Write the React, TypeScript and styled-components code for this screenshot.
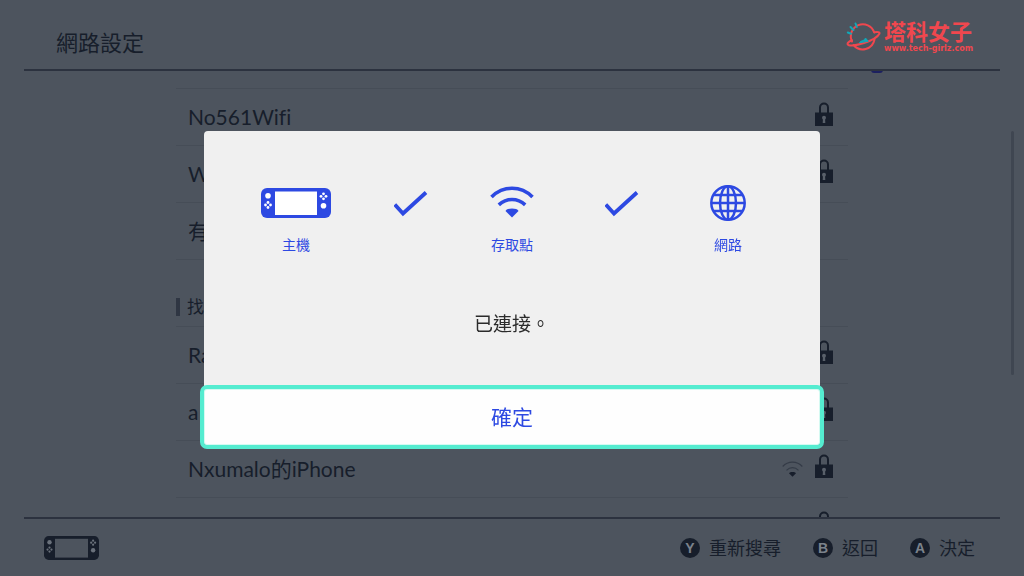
import React from "react";
import styled, { createGlobalStyle } from "styled-components";

const ink = "#171e2b";
const backdrop = "#4d545e";
const accent = "#2d49e2";

const GlobalStyle = createGlobalStyle`
  * { box-sizing: border-box; }
  body {
    margin: 0;
    background: ${backdrop};
    color: ${ink};
    font-family: Lato, "Noto Sans CJK TC", sans-serif;
    font-variant-ligatures: none;
  }
  button { font: inherit; color: inherit; background: none; border: 0; padding: 0; cursor: pointer; }
  h1, h2, p, ul { margin: 0; padding: 0; font-weight: 400; }
  svg { display: block; flex: none; }
`;

const Screen = styled.div`
  display: grid;
  grid-template-rows: auto minmax(0, 1fr) auto;
  height: 100vh;
  padding: 0 24px;
`;

const Header = styled.header`
  display: flex;
  justify-content: space-between;
  height: 71px;
  padding: 0 22px 0 32px;
  border-bottom: 2px solid #2c323f;
`;

const Title = styled.h1`
  align-self: center;
  padding-top: 16px;
  font-size: 22px;
  line-height: 32px;
`;

const Brand = styled.a`
  display: flex;
  align-items: flex-start;
  gap: 2px;
  padding-top: 21px;
  color: #f0474e;
  text-decoration: none;
`;

const BrandText = styled.span`
  display: flex;
  flex-direction: column;
  min-width: 94px;
`;

const BrandName = styled.strong`
  font-size: 22px;
  line-height: 22px;
  font-weight: 700;
`;

const BrandUrl = styled.small`
  font: 700 8px/12px "DejaVu Sans", sans-serif;
`;

const Main = styled.main`
  position: relative;
  overflow: hidden;
  padding-top: 17px;
`;

const Column = styled.div`
  width: 100%;
  max-width: 672px;
  margin: 0 auto;
`;

const NetworkList = styled.ul`
  list-style: none;
  border-top: 1px solid #464d57;
`;

const NetworkItem = styled.li`
  border-bottom: 1px solid #464d57;
`;

const NetworkButton = styled.button`
  display: flex;
  align-items: center;
  gap: 12px;
  width: 100%;
  height: 56px;
  padding: 0 15px 0 12px;
  font-size: 21px;
  line-height: 32px;
  text-align: left;
`;

const NetworkName = styled.span`
  flex: 1;
`;

const SectionTitle = styled.h2`
  display: flex;
  align-items: center;
  gap: 7px;
  padding: 34px 0 7px;
  font-size: 17px;
  line-height: 25px;

  &::before {
    content: "";
    width: 4px;
    height: 18px;
    background: #2f3643;
  }
`;

const Spinner = styled.span`
  position: absolute;
  top: -1px;
  right: 117px;
  width: 12px;
  height: 3px;
  border-radius: 0 0 6px 6px;
  background: #1c2060;
`;

const ScrollThumb = styled.div`
  position: fixed;
  top: 131px;
  right: 10px;
  width: 3px;
  height: 244px;
  border-radius: 2px;
  background: #3f4651;
`;

const Footer = styled.footer`
  display: flex;
  align-items: center;
  justify-content: space-between;
  height: 59px;
  padding: 0 25px 0 20px;
  border-top: 2px solid #2c323f;
`;

const Actions = styled.div`
  display: flex;
  gap: 32px;
`;

const Action = styled.button`
  display: flex;
  align-items: center;
  gap: 9px;
  font-size: 18px;
  line-height: 26px;
`;

const Key = styled.kbd`
  width: 20px;
  height: 20px;
  border-radius: 50%;
  background: ${ink};
  color: #7b828b;
  font: 700 14px/20px "Liberation Sans", sans-serif;
  text-align: center;
`;

const Overlay = styled.div`
  position: fixed;
  inset: 0;
  display: flex;
  align-items: center;
  justify-content: center;
`;

const Dialog = styled.section`
  width: calc(100% - 80px);
  max-width: 616px;
  border-radius: 4px;
  background: #f0f0f0;
`;

const Steps = styled.div`
  display: grid;
  grid-template-columns: 70px 159fr 44px 176fr 36px;
  justify-items: center;
  padding: 52px 74px 0 57px;
  color: ${accent};
`;

const Step = styled.div`
  display: flex;
  flex-direction: column;
  align-items: center;
  gap: 12px;
  font-size: 14px;
  line-height: 20px;
  white-space: nowrap;
`;

const Mark = styled.div`
  display: flex;
  align-items: center;
  height: 40px;
`;

const Message = styled.p`
  padding: 55px 0 51px;
  color: #2b2b2b;
  font-size: 19px;
  line-height: 28px;
  text-align: center;
`;

const Confirm = styled.button`
  display: block;
  width: 100%;
  height: 56px;
  border-radius: 3px;
  background: #fefefe;
  box-shadow: inset 0 0 0 1px #d5faf2;
  outline: 4px solid #55ecd0;
  color: ${accent};
  font-size: 21px;
  line-height: 56px;
`;

const Console = ({ width, height, screen, dots }: { width: number; height: number; screen: string; dots: string }) => (
  <svg width={width} height={height} viewBox="0 0 70 30" preserveAspectRatio="none" aria-hidden="true">
    <rect width="70" height="30" rx="6" fill="currentColor" />
    <rect x="14" y="3.5" width="42" height="23.5" fill={screen} />
    <g fill={dots}>
      <circle cx="7" cy="7.7" r="2.8" />
      <circle cx="62.5" cy="17.8" r="2.8" />
      {[[7, 17], [62.5, 8.3]].map(([x, y]) => (
        <g key={x}>
          <circle cx={x} cy={y - 2.5} r="1.4" />
          <circle cx={x} cy={y + 2.5} r="1.4" />
          <circle cx={x - 2.5} cy={y} r="1.4" />
          <circle cx={x + 2.5} cy={y} r="1.4" />
        </g>
      ))}
    </g>
  </svg>
);

const Check = () => (
  <svg width="34" height="28" viewBox="0 0 34 28" fill="none" stroke="currentColor" strokeWidth="3.8" aria-hidden="true">
    <path d="M.8 15.500 9 24.500 32 3.500" />
  </svg>
);

const Wifi = () => (
  <svg width="44" height="34" viewBox="0 0 44 34" fill="none" stroke="currentColor" strokeWidth="3.6" aria-hidden="true">
    <path d="M1.5 11C13-.6 31-.6 42.500 11" />
    <path d="M8.800 18.800C16.500 11.800 27.500 11.800 35.200 18.800" />
    <path d="M15.500 25C17 21.800 27 21.800 28.500 25L22 31.500Z" fill="currentColor" stroke="none" />
  </svg>
);

const WeakWifi = () => (
  <svg width="21" height="16" viewBox="0 0 21 16" fill="none" stroke="#343b47" strokeWidth="1.2" aria-hidden="true">
    <path d="M.7 5.500C6-.3 15-.3 20.300 5.500" />
    <path d="M4.500 9.300C8 5.800 13 5.800 16.500 9.300" />
    <path d="M7 12.300C8 10.700 13 10.700 14 12.300L10.500 15.800Z" fill={ink} stroke="none" />
  </svg>
);

const Globe = () => (
  <svg width="36" height="36" viewBox="0 0 36 36" fill="none" stroke="currentColor" strokeWidth="2.5" aria-hidden="true">
    <circle cx="18" cy="18" r="16.700" />
    <ellipse cx="18" cy="18" rx="8" ry="16.700" />
    <path d="M18 1V35M1.500 18H34.500M4 10H32M4 26H32" />
  </svg>
);

const Lock = () => (
  <svg width="18" height="30" viewBox="0 0 18 30" aria-hidden="true">
    <path d="M5 11V5.500a4 4 0 0 1 8 0V11" fill="none" stroke={ink} strokeWidth="2" />
    <rect y="10.500" width="18" height="13.500" fill={ink} />
    <circle cx="9" cy="15.800" r="2" fill="#59606a" />
    <path d="M8 16h2l.3 5H7.700Z" fill="#59606a" />
  </svg>
);

const Planet = () => (
  <svg width="36" height="32" viewBox="0 0 36 32" fill="none" strokeWidth="2" strokeLinecap="round" aria-hidden="true">
    <g stroke="currentColor">
      <path d="M28.200 11.500A12 12 0 1 0 6 20.500M28.500 18.500A12 12 0 0 1 7.500 24" />
      <path d="M28.500 11.200C31.500 10.800 34 11 33.500 12.500C32 15.800 25.500 19.500 18 22C9.500 24.800 1.500 25.300 1.500 23C1.600 21.300 3.500 20.300 6 19.300" />
    </g>
    <g stroke="#10a9b9">
      <path d="M1.800 11.500 5 12.700M4.500 6 7.500 9M9.500 2.500 10.800 6" />
      <path d="M13.500 21.500C15.500 18.800 18.500 20.500 19.500 17L22 20Z" fill="#10a9b9" strokeWidth="1" />
    </g>
  </svg>
);

type Network = { name: string; weak?: boolean; open?: boolean };

const saved: Network[] = [{ name: "No561Wifi" }, { name: "W" }, { name: "有", open: true }];
const found: Network[] = [{ name: "Ra" }, { name: "a" }, { name: "Nxumalo的iPhone", weak: true }, { name: "" }];

const Networks = ({ items }: { items: Network[] }) => (
  <NetworkList>
    {items.map((item, index) => (
      <NetworkItem key={index}>
        <NetworkButton type="button">
          <NetworkName>{item.name}</NetworkName>
          {item.weak && <WeakWifi />}
          {!item.open && <Lock />}
        </NetworkButton>
      </NetworkItem>
    ))}
  </NetworkList>
);

const actions = [
  { key: "Y", label: "重新搜尋" },
  { key: "B", label: "返回" },
  { key: "A", label: "決定" },
];

export default function App() {
  return (
    <>
      <GlobalStyle />
      <Screen>
        <Header>
          <Title>網路設定</Title>
          <Brand href="#">
            <Planet />
            <BrandText>
              <BrandName>塔科女子</BrandName>
              <BrandUrl>www.tech-girlz.com</BrandUrl>
            </BrandText>
          </Brand>
        </Header>
        <Main>
          <Spinner />
          <Column>
            <Networks items={saved} />
            <SectionTitle>找</SectionTitle>
            <Networks items={found} />
          </Column>
          <ScrollThumb />
        </Main>
        <Footer>
          <Console width={55} height={24} screen={backdrop} dots="#6a717b" />
          <Actions>
            {actions.map((action) => (
              <Action type="button" key={action.key}>
                <Key>{action.key}</Key>
                {action.label}
              </Action>
            ))}
          </Actions>
        </Footer>
      </Screen>
      <Overlay>
        <Dialog role="dialog" aria-modal="true" aria-describedby="status">
          <Steps>
            <Step>
              <Mark><Console width={70} height={30} screen="#ffffff" dots="#ffffff" /></Mark>
              主機
            </Step>
            <Mark><Check /></Mark>
            <Step>
              <Mark><Wifi /></Mark>
              存取點
            </Step>
            <Mark><Check /></Mark>
            <Step>
              <Mark><Globe /></Mark>
              網路
            </Step>
          </Steps>
          <Message id="status">已連接。</Message>
          <Confirm type="button">確定</Confirm>
        </Dialog>
      </Overlay>
    </>
  );
}
